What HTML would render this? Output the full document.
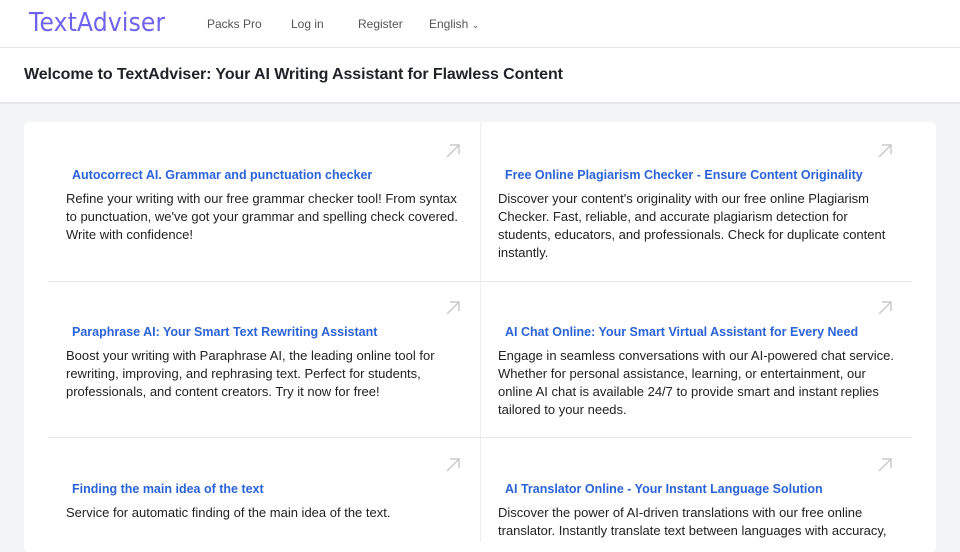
<!DOCTYPE html>
<html><head><meta charset="utf-8"><style>
*{margin:0;padding:0;box-sizing:border-box}
body{width:960px;height:540px;overflow:hidden;background:#f3f4f6;font-family:"Liberation Sans",sans-serif;position:relative}
.hdr{position:absolute;left:0;top:0;width:960px;height:48px;background:#fff;border-bottom:1px solid #e5e7eb}
.logo{position:absolute;left:29px;top:8px;font-size:26px;color:#6f62ee;font-family:"DejaVu Sans",sans-serif;font-weight:normal;letter-spacing:0.2px;transform:scaleX(0.9);transform-origin:left}
.nav{position:absolute;top:17px;font-size:12px;color:#555}
.tb{position:absolute;left:0;top:48px;width:960px;height:56px;background:#fff;border-bottom:2px solid #e5e7eb}
.tb h1{position:absolute;left:24px;top:18px;font-size:16px;font-weight:bold;color:#1f2328;letter-spacing:-0.1px}
.panel{position:absolute;left:24px;top:122px;width:912px;height:430px;background:#fff;border-radius:6px}
.vd{position:absolute;left:480px;top:122px;width:1px;height:420px;background:#eceef1}
.hd{position:absolute;left:48px;width:864px;height:1px;background:#e7e9ec}
.t{position:absolute;font-size:12.5px;font-weight:bold;color:#2b63d9;white-space:nowrap}
.b{position:absolute;font-size:13px;line-height:18px;color:#222;width:400px}
.ar{position:absolute;width:16px;height:16px}
</style></head><body>
<div class="hdr">
<div class="logo">TextAdviser</div>
<div class="nav" style="left:207px">Packs Pro</div>
<div class="nav" style="left:291px">Log in</div>
<div class="nav" style="left:358px">Register</div>
<div class="nav" style="left:429px">English <span style="font-size:9px">&#8964;</span></div>
</div>
<div class="tb"><h1>Welcome to TextAdviser: Your AI Writing Assistant for Flawless Content</h1></div>
<div class="panel"></div>
<div class="vd"></div>
<div class="hd" style="top:281px"></div>
<div class="hd" style="top:437px"></div>

<svg class="ar" style="left:445px;top:143px" viewBox="0 0 16 16"><path d="M2 14L14 2M5 2H14V11" stroke="#c8c8c8" stroke-width="1.4" fill="none"/></svg>
<svg class="ar" style="left:877px;top:143px" viewBox="0 0 16 16"><path d="M2 14L14 2M5 2H14V11" stroke="#c8c8c8" stroke-width="1.4" fill="none"/></svg>
<svg class="ar" style="left:445px;top:300px" viewBox="0 0 16 16"><path d="M2 14L14 2M5 2H14V11" stroke="#c8c8c8" stroke-width="1.4" fill="none"/></svg>
<svg class="ar" style="left:877px;top:300px" viewBox="0 0 16 16"><path d="M2 14L14 2M5 2H14V11" stroke="#c8c8c8" stroke-width="1.4" fill="none"/></svg>
<svg class="ar" style="left:445px;top:457px" viewBox="0 0 16 16"><path d="M2 14L14 2M5 2H14V11" stroke="#c8c8c8" stroke-width="1.4" fill="none"/></svg>
<svg class="ar" style="left:877px;top:457px" viewBox="0 0 16 16"><path d="M2 14L14 2M5 2H14V11" stroke="#c8c8c8" stroke-width="1.4" fill="none"/></svg>

<div class="t" style="left:72px;top:168px">Autocorrect AI. Grammar and punctuation checker</div>
<div class="b" style="left:66px;top:190px">Refine your writing with our free grammar checker tool! From syntax to punctuation, we've got your grammar and spelling check covered. Write with confidence!</div>
<div class="t" style="left:505px;top:168px">Free Online Plagiarism Checker - Ensure Content Originality</div>
<div class="b" style="left:498px;top:190px">Discover your content's originality with our free online Plagiarism Checker. Fast, reliable, and accurate plagiarism detection for students, educators, and professionals. Check for duplicate content instantly.</div>

<div class="t" style="left:72px;top:325px">Paraphrase AI: Your Smart Text Rewriting Assistant</div>
<div class="b" style="left:66px;top:347px">Boost your writing with Paraphrase AI, the leading online tool for rewriting, improving, and rephrasing text. Perfect for students, professionals, and content creators. Try it now for free!</div>
<div class="t" style="left:505px;top:325px">AI Chat Online: Your Smart Virtual Assistant for Every Need</div>
<div class="b" style="left:498px;top:347px">Engage in seamless conversations with our AI-powered chat service. Whether for personal assistance, learning, or entertainment, our online AI chat is available 24/7 to provide smart and instant replies tailored to your needs.</div>

<div class="t" style="left:72px;top:482px">Finding the main idea of the text</div>
<div class="b" style="left:66px;top:504px">Service for automatic finding of the main idea of the text.</div>
<div class="t" style="left:505px;top:482px">AI Translator Online - Your Instant Language Solution</div>
<div class="b" style="left:498px;top:504px">Discover the power of AI-driven translations with our free online translator. Instantly translate text between languages with accuracy,</div>
</body></html>
